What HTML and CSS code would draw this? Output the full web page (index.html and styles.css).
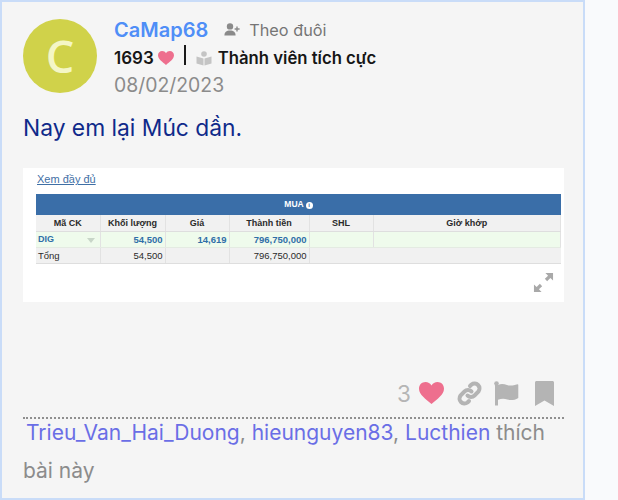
FILE: index.html
```html
<!DOCTYPE html>
<html lang="en">
<head>
  <meta charset="UTF-8">
  <meta name="viewport" content="width=device-width, initial-scale=1">
  <title>CaMap68</title>
  <link rel="stylesheet" href="styles.css">
</head>
<body>
  <div class="post">
    <div class="post-head">
      <div class="avatar">C</div>
      <div class="user-info">
        <div class="name-row">
          <a href="#" class="username">CaMap68</a>
          <span class="follow">
            <svg width="16" height="13" viewBox="0 0 16 13"><circle cx="6" cy="3.4" r="3.2" fill="#8a8a8a"/><path d="M0.4 12.6c0-3.6 2-5.2 5.6-5.2s5.600 1.600 5.600 5.200z" fill="#8a8a8a"/><path d="M13 3.500v5M10.600 6h5" stroke="#8a8a8a" stroke-width="1.400" fill="none"/></svg>
            Theo đuôi
          </span>
        </div>
        <div class="stat-row">
          <span class="likes">1693</span>
          <svg class="stat-heart" width="16" height="14" viewBox="0 0 32 28"><path d="M16 28C9 22 0 16 0 8.500 0 3.500 3.800 0 8.300 0 11.500 0 14.500 1.700 16 4.500 17.500 1.700 20.500 0 23.700 0 28.200 0 32 3.500 32 8.500 32 16 23 22 16 28z" fill="#ee6f8e"/></svg>
          <span class="divider"></span>
          <svg class="book" width="16" height="15" viewBox="0 0 16 15"><circle cx="8" cy="3" r="2.800" fill="#c4c4c4"/><path d="M0.500 5.500l7 2v7l-7-2zM15.500 5.500l-7 2v7l7-2z" fill="#c4c4c4"/></svg>
          <span class="rank">Thành viên tích cực</span>
        </div>
        <div class="date">08/02/2023</div>
      </div>
    </div>

    <p class="post-text">Nay em lại Múc dần.</p>

    <div class="shot">
      <a href="#" class="shot-link">Xem đầy đủ</a>
      <div class="buy-title">MUA <span class="info">i</span></div>
      <table class="buy-table">
        <colgroup>
          <col class="c1"><col class="c2"><col class="c3"><col class="c4"><col class="c5"><col>
        </colgroup>
        <thead>
          <tr><th>Mã CK</th><th>Khối lượng</th><th>Giá</th><th>Thành tiền</th><th>SHL</th><th>Giờ khớp</th></tr>
        </thead>
        <tbody>
          <tr class="row-buy">
            <td class="code">DIG<span class="caret"></span></td>
            <td class="num">54,500</td><td class="num">14,619</td><td class="num">796,750,000</td><td></td><td></td>
          </tr>
          <tr class="row-total">
            <td class="total-label">Tổng</td>
            <td class="num">54,500</td><td></td><td class="num">796,750,000</td><td></td><td></td>
          </tr>
        </tbody>
      </table>
      <div class="expand-row">
        <svg width="21" height="21" viewBox="0 0 22 22"><path d="M13 1h8v8l-2.800-2.800-3.400 3.400-2.400-2.400 3.400-3.400zM9 21H1v-8l2.800 2.800 3.400-3.400 2.400 2.400-3.400 3.400z" fill="#a9a9a9"/></svg>
      </div>
    </div>

    <div class="actions">
      <span class="like-count">3</span>
      <svg class="act-heart" width="25" height="22" viewBox="0 0 32 28"><path d="M16 28C9 22 0 16 0 8.500 0 3.500 3.800 0 8.300 0 11.500 0 14.500 1.700 16 4.500 17.500 1.700 20.500 0 23.700 0 28.200 0 32 3.500 32 8.500 32 16 23 22 16 28z" fill="#ee6f8e"/></svg>
      <svg class="act-link" width="25" height="25" viewBox="0 0 25 25"><g fill="none" stroke="#b4b4b4" stroke-width="4" stroke-linecap="round"><path d="M10.500 14.500a5 5 0 0 0 7 0l4-4a5 5 0 0 0-7-7l-1.500 1.500"/><path d="M14.500 10.500a5 5 0 0 0-7 0l-4 4a5 5 0 0 0 7 7l1.500-1.500"/></g></svg>
      <svg class="act-flag" width="25" height="25" viewBox="0 0 25 25"><circle cx="2.500" cy="2.500" r="2.300" fill="#b4b4b4"/><path d="M1 3h3v21.500H1z" fill="#b4b4b4"/><path d="M4 4c3-1.500 6-1 9 0s6 .8 10.500-.8c.6 0 .8.300.8.800v13c-4 2.500-8 2.500-11 1.500s-6-1-9.300.300z" fill="#b4b4b4"/></svg>
      <svg class="act-mark" width="19" height="25" viewBox="0 0 19 25"><path d="M1.500 0h16c.8 0 1.500.700 1.500 1.500V25l-9.500-5.500L0 25V1.500C0 .7.700 0 1.500 0z" fill="#b4b4b4"/></svg>
    </div>

    <div class="dots"></div>

    <div class="liked-by">
      <a href="#" class="first-name">Trieu_Van_Hai_Duong</a><span>,</span> <a href="#">hieunguyen83</a><span>,</span> <a href="#">Lucthien</a> <span>thích</span> <span>bài này</span>
    </div>
  </div>
</body>
</html>
```

FILE: styles.css
```css
* {
  margin: 0;
  padding: 0;
  box-sizing: border-box;
}

html, body {
  height: 500px;
  overflow: hidden;
}

body {
  font-family: 'Inter', sans-serif;
  background: #f9fafc;
}

a {
  text-decoration: none;
}

/* Post card */
.post {
  width: 585px;
  height: 500px;
  background: #f5f5f5;
  border: 2px solid #c9dcf8;
  padding: 17px 21px 0 21px;
}

.post-head {
  display: flex;
  gap: 17px;
}

.avatar {
  width: 74px;
  height: 74px;
  border-radius: 50%;
  background: #d0d24a;
  color: #f4f6c6;
  font-family: 'Open Sans', sans-serif;
  font-size: 45px;
  font-weight: 600;
  line-height: 74px;
  text-align: center;
}

.user-info {
  margin-top: -3px;
}

.name-row {
  display: flex;
  align-items: center;
  height: 27px;
}

.username {
  font-size: 20px;
  font-weight: 600;
  color: #4f8ef7;
}

.follow {
  display: flex;
  align-items: center;
  gap: 9px;
  margin-left: 16px;
  font-size: 16.300px;
  color: #757575;
}

.stat-row {
  display: flex;
  align-items: center;
  height: 30px;
}

.likes {
  font-size: 17px;
  font-weight: 600;
  color: #161616;
}

.stat-heart {
  margin-left: 4px;
}

.divider {
  width: 2px;
  height: 20px;
  margin: -6px 0 0 10px;
  background: #1a1a1a;
}

.book {
  margin-left: 10px;
}

.rank {
  margin-left: 6px;
  font-size: 16.700px;
  font-weight: 600;
  color: #161616;
}

.date {
  font-size: 19.400px;
  line-height: 25px;
  color: #8b8b8b;
}

.post-text {
  margin-top: 15px;
  font-size: 22.800px;
  line-height: 30px;
  color: #0f2a8a;
}

/* Screenshot inside the post */
.shot {
  width: 541px;
  height: 134px;
  margin-top: 25px;
  background: #fff;
  padding: 5px 3px 0 13px;
  font-family: 'Liberation Sans', sans-serif;
}

.shot-link {
  display: block;
  height: 21px;
  font-size: 11px;
  line-height: 13px;
  color: #3f6fa5;
  text-decoration: underline;
  margin-left: 1px;
}

.buy-title {
  height: 21px;
  background: #3a6ea8;
  color: #fff;
  font-size: 8.500px;
  font-weight: 700;
  line-height: 21px;
  text-align: center;
}

.info {
  display: inline-block;
  width: 7px;
  height: 7px;
  border-radius: 50%;
  background: #fff;
  color: #3a6ea8;
  font-size: 6px;
  line-height: 7px;
  vertical-align: 0;
}

.buy-table {
  width: 525px;
  border-collapse: collapse;
  table-layout: fixed;
  font-size: 9px;
  color: #2a2a2a;
}

.c1 { width: 64px; }
.c2 { width: 65px; }
.c3 { width: 64px; }
.c4 { width: 80px; }
.c5 { width: 64px; }

.buy-table th,
.buy-table td {
  height: 16px;
  border-right: 1px solid #e2e2e2;
  border-bottom: 1px solid #dedede;
  padding: 0 2px;
}

.buy-table th {
  background: #f1f1f1;
  font-weight: 700;
  text-align: center;
}

.row-buy td {
  background: #effbec;
  border-bottom-color: #e4ebe2;
}

.row-total td {
  background: #f1f1f1;
  font-size: 9.500px;
}

.row-total td:nth-child(n+5) {
  border-right: none;
}

.code {
  color: #2f6fa8;
  font-weight: 700;
}

.caret {
  float: right;
  width: 0;
  height: 0;
  margin: 4px 3px 0 0;
  border-left: 4px solid transparent;
  border-right: 4px solid transparent;
  border-top: 5px solid #c8d6c8;
}

.num {
  text-align: right;
}

.row-buy .num {
  color: #2f6fa8;
  font-weight: 700;
  font-size: 9.500px;
}

.expand-row {
  display: flex;
  justify-content: flex-end;
  padding: 8px 7px 0 0;
}

/* Post actions */
.actions {
  display: flex;
  align-items: center;
  justify-content: flex-end;
  height: 28px;
  margin-top: 77px;
}

.like-count {
  font-size: 22.500px;
  color: #b5b5b5;
}

.act-heart {
  margin-left: 8px;
}

.act-link {
  margin-left: 13px;
}

.act-flag {
  margin-left: 12px;
}

.act-mark {
  margin-left: 16px;
  margin-right: 8px;
}

.dots {
  width: 541px;
  margin-top: 10px;
  border-top: 2px dotted #8f8f8f;
}

.liked-by {
  width: 541px;
  margin-top: -5px;
  font-size: 21px;
  line-height: 38px;
  color: #8c8c8c;
}

.liked-by a {
  color: #6a6ee6;
}

.first-name {
  margin-left: 3px;
}
```
